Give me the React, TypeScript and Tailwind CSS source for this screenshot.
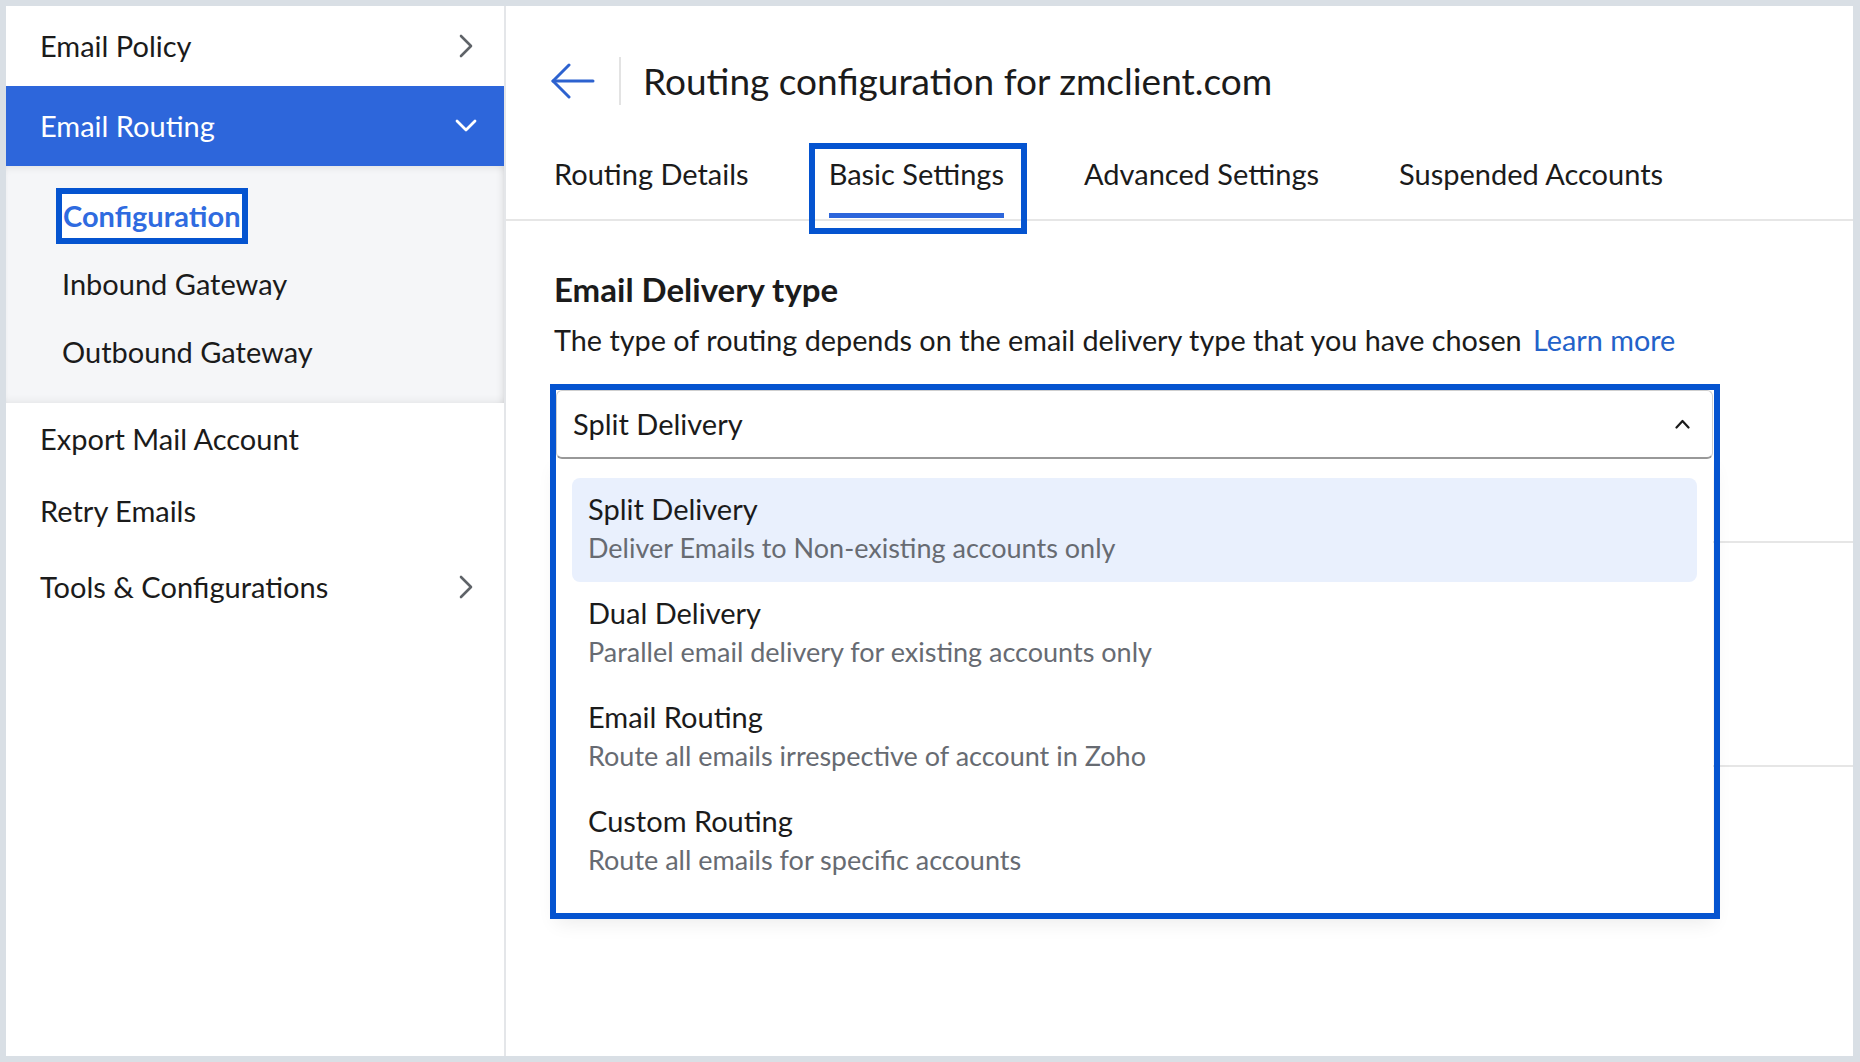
import React from 'react';

const font = { fontFamily: 'Lato, "Noto Sans", sans-serif' };

const ChevronRight = () => (
  <svg width="14" height="24" viewBox="0 0 14 24" fill="none">
    <polyline points="2,2 12,12 2,22" stroke="#5f6368" strokeWidth="2.6" strokeLinecap="round" strokeLinejoin="round" />
  </svg>
);

const ChevronDown = () => (
  <svg width="22" height="14" viewBox="0 0 22 14" fill="none">
    <polyline points="2,2 11,11 20,2" stroke="#ffffff" strokeWidth="2.8" strokeLinecap="round" strokeLinejoin="round" />
  </svg>
);

const ChevronUp = () => (
  <svg width="15" height="10" viewBox="0 0 15 10" fill="none">
    <polyline points="1.5,8.5 7.5,2 13.5,8.5" stroke="#1b1b1b" strokeWidth="2.2" strokeLinecap="round" strokeLinejoin="round" />
  </svg>
);

const BackArrow = () => (
  <svg width="44" height="36" viewBox="0 0 44 36" fill="none">
    <polyline points="18,2 2,18 18,34" stroke="#2d62cf" strokeWidth="3" strokeLinecap="round" strokeLinejoin="round" />
    <line x1="2" y1="18" x2="42" y2="18" stroke="#2d62cf" strokeWidth="3" strokeLinecap="round" />
  </svg>
);

const options = [
  { title: 'Split Delivery', desc: 'Deliver Emails to Non-existing accounts only', active: true },
  { title: 'Dual Delivery', desc: 'Parallel email delivery for existing accounts only' },
  { title: 'Email Routing', desc: 'Route all emails irrespective of account in Zoho' },
  { title: 'Custom Routing', desc: 'Route all emails for specific accounts' },
];

const tabs = ['Routing Details', 'Basic Settings', 'Advanced Settings', 'Suspended Accounts'];

const Sidebar = () => (
  <aside className="w-[500px] shrink-0 bg-white border-r-2 border-[#e4e6e9] flex flex-col text-[29px] text-[#1b1b1b]">
    <div className="h-[80px] flex items-center justify-between pl-[34px] pr-[31px]">
      <span>Email Policy</span>
      <ChevronRight />
    </div>
    <div className="h-[80px] flex items-center justify-between pl-[34px] pr-[27px] bg-[#2d66db] text-white">
      <span>Email Routing</span>
      <ChevronDown />
    </div>
    <div className="bg-[#f5f6f8] pt-[16px] pb-[17px] shadow-[inset_0_6px_10px_-6px_rgba(0,0,0,0.12),inset_-8px_0_10px_-8px_rgba(0,0,0,0.12),inset_0_-6px_10px_-6px_rgba(0,0,0,0.1)]">
      <div className="h-[68px] flex items-center pl-[50px]">
        <span className="h-[56px] flex items-center border-[6px] border-[#0554d0] bg-white px-[1px] font-bold text-[#2f6be0]">
          Configuration
        </span>
      </div>
      <div className="h-[68px] flex items-center pl-[56px]">Inbound Gateway</div>
      <div className="h-[68px] flex items-center pl-[56px]">Outbound Gateway</div>
    </div>
    <div className="h-[72px] flex items-center pl-[34px]">Export Mail Account</div>
    <div className="h-[72px] flex items-center pl-[34px]">Retry Emails</div>
    <div className="h-[80px] flex items-center justify-between pl-[34px] pr-[31px]">
      <span>Tools &amp; Configurations</span>
      <ChevronRight />
    </div>
  </aside>
);

export default function App() {
  return (
    <div style={font} className="w-[1860px] h-[1062px] bg-[#d9dfe5] pt-[6px] pl-[6px] pr-[7px] pb-[6px]">
      <div className="flex h-full bg-white overflow-hidden">
        <Sidebar />
        <main className="flex-1 flex flex-col text-[#1b1b1b]">
          <div className="pt-[51px] pl-[45px] flex items-center">
            <BackArrow />
            <div className="ml-[24px] w-[2px] h-[48px] bg-[#e3e3e3]" />
            <h1 className="ml-[22px] text-[37px] leading-[44px]">Routing configuration for zmclient.com</h1>
          </div>

          <div className="mt-[35px] flex gap-[80px] pl-[48px] border-b-2 border-[#e6e6e6]">
            {tabs.map((t) => (
              <div key={t} className="relative h-[79px] pt-[17px] text-[29px] leading-[34px]">
                {t}
                {t === 'Basic Settings' && (
                  <>
                    <div className="absolute left-0 right-0 bottom-[1px] h-[5px] bg-[#2d66db]" />
                    <div className="absolute -left-[20px] -right-[23px] top-[3px] -bottom-[15px] border-[6px] border-[#0554d0]" />
                  </>
                )}
              </div>
            ))}
          </div>

          <div className="pl-[48px]">
            <h2 className="mt-[49px] text-[33px] leading-[38px] font-bold">Email Delivery type</h2>
            <p className="mt-[14px] text-[28.8px] leading-[36px]">
              The type of routing depends on the email delivery type that you have chosen{' '}
              <span className="text-[#2362c9] ml-[4px]">Learn more</span>
            </p>

            <div className="relative mt-[32px] ml-[2px] w-[1157px]">
              <div className="h-[69px] flex items-center justify-between pl-[16px] pr-[22px] rounded-[6px] border border-[#cfcfcf] border-b-2 border-b-[#9a9a9a] bg-white text-[29px]">
                <span>Split Delivery</span>
                <ChevronUp />
              </div>

              <div className="absolute z-10 left-0 right-0 top-full bg-white px-[16px] pt-[19px] pb-[19px] shadow-[0_10px_18px_rgba(0,0,0,0.08)]">
                {options.map((o) => (
                  <div
                    key={o.title}
                    className={`h-[104px] pl-[16px] pt-[13px] rounded-[8px] ${o.active ? 'bg-[#e9f0fd]' : ''}`}
                  >
                    <div className="text-[29px] leading-[36px]">{o.title}</div>
                    <div className="mt-[4px] text-[27px] leading-[34px] text-[#676b72]">{o.desc}</div>
                  </div>
                ))}
              </div>

              <div className="absolute z-20 -left-[6px] -right-[7px] -top-[6px] h-[535px] border-[6px] border-[#0554d0] pointer-events-none" />
            </div>
          </div>

          <div className="ml-[48px] mt-[82px] h-[2px] bg-[#e6e6e6]" />
          <div className="ml-[48px] mt-[222px] h-[2px] bg-[#e6e6e6]" />
        </main>
      </div>
    </div>
  );
}
